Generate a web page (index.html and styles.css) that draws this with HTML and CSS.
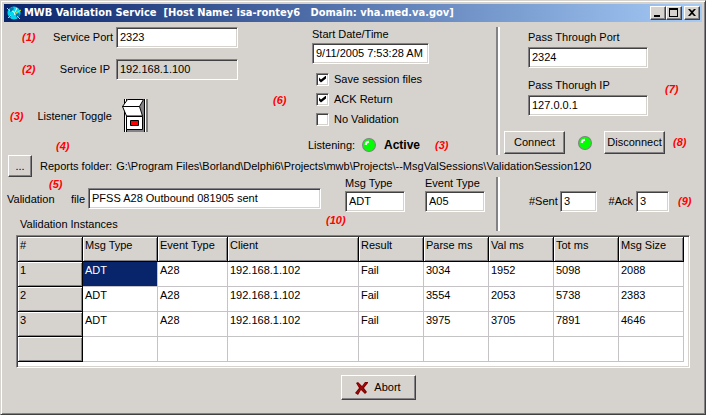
FILE: index.html
```html
<!DOCTYPE html>
<html lang="en">
<head>
<meta charset="utf-8">
<title>MWB Validation Service</title>
<link rel="stylesheet" href="styles.css">
</head>
<body>
<main class="window">
  <header class="titlebar">
    <svg class="app-icon" viewBox="0 0 16 16" aria-hidden="true">
      <circle cx="8" cy="8" r="6.5" fill="#00d8f0"/>
      <path d="M4 3l3-1 1 2-2 2-2 1zM10 9l3-1 1 2-2 3-2-1zM3 10l2 1v2z" fill="#0878a8"/>
      <path d="M6 6l2 1 1 3M11 3l-2 4" stroke="#fff" fill="none"/>
      <path d="M1 3l3 3M15 5l-5 3M2 13l3-3M11 11l3 3" stroke="#d8d820"/>
    </svg>
    <h1 class="title">MWB Validation Service  [Host Name: isa-rontey6   Domain: vha.med.va.gov]</h1>
    <div class="window-buttons">
      <button class="button caption-button" type="button" aria-label="Minimize"><svg viewBox="0 0 12 10"><path d="M2 7h6v2H2z"/></svg></button>
      <button class="button caption-button" type="button" aria-label="Maximize"><svg viewBox="0 0 12 10"><path d="M1 0h9v9H1zM2 2v6h7V2z" fill-rule="evenodd"/></svg></button>
      <button class="button caption-button close" type="button" aria-label="Close"><svg viewBox="0 0 12 10"><path d="M2 1h2l2 2 2-2h2L7 4.500l3 3.500H8L6 6 4 8H2l3-3.500z"/></svg></button>
    </div>
  </header>

  <form class="client">
    <section class="top">
      <div class="service">
        <div class="service-row">
          <span class="note">(1)</span>
          <label for="port">Service Port</label>
          <input class="field" id="port" type="text" value="2323">
        </div>
        <div class="service-row">
          <span class="note">(2)</span>
          <label class="ip-label" for="ip">Service IP</label>
          <input class="field locked" id="ip" type="text" value="192.168.1.100" readonly>
        </div>
        <div class="toggle-row">
          <span class="note">(3)</span>
          <label for="toggle">Listener Toggle</label>
          <button class="toggle" id="toggle" type="button">
            <svg viewBox="0 0 26 34" aria-hidden="true">
              <path d="M2 0h24v33H2z" fill="#fff"/>
              <path d="M17 7l5-7v33H5v-3h15V17z" fill="#848284"/>
              <path d="M2.500 0v33M4.500 0v33M22.500 0v33M25 0v33" stroke="#000"/>
              <path d="M5.500.5h16l-4 7H.5z" fill="#fff" stroke="#000"/>
              <path d="M.5 7.500h17l3 9.500h-16z" fill="#fff" stroke="#000"/>
              <path d="M4.500 17.500h16v13h-16z" fill="#fff" stroke="#000"/>
              <path d="M8.500 21.500h8v5h-8z" fill="#f00" stroke="#000"/>
            </svg>
          </button>
        </div>
        <span class="note note-folder">(4)</span>
      </div>

      <div class="session">
        <label for="start">Start Date/Time</label>
        <input class="field start" id="start" type="text" value="9/11/2005 7:53:28 AM">
        <span class="note note-options">(6)</span>
        <div class="checks">
          <label class="check"><input type="checkbox" checked>Save session files</label>
          <label class="check"><input type="checkbox" checked>ACK Return</label>
          <label class="check"><input type="checkbox">No Validation</label>
        </div>
        <div class="listening">
          <span class="caption">Listening:</span>
          <svg class="led" viewBox="0 0 13 13" aria-hidden="true"><circle cx="6.500" cy="6.500" r="6" fill="#0f0" stroke="#848284"/><path d="M3.500 6.500q0-3 3-3" stroke="#fff" stroke-width="2" fill="none"/></svg>
          <strong class="status">Active</strong>
          <span class="note">(3)</span>
        </div>
      </div>

      <div class="pass divided">
        <div class="pass-fields">
          <label for="pass-port">Pass Through Port</label>
          <input class="field" id="pass-port" type="text" value="2324">
          <label for="pass-ip">Pass Thorugh IP</label>
          <input class="field" id="pass-ip" type="text" value="127.0.0.1">
          <span class="note note-pass">(7)</span>
        </div>
        <div class="connection">
          <button class="button" type="button">Connect</button>
          <svg class="led" viewBox="0 0 13 13" aria-hidden="true"><circle cx="6.500" cy="6.500" r="6" fill="#0f0" stroke="#848284"/><path d="M3.500 6.500q0-3 3-3" stroke="#fff" stroke-width="2" fill="none"/></svg>
          <button class="button" type="button">Disconnect</button>
          <span class="note">(8)</span>
        </div>
      </div>
    </section>

    <section class="reports">
      <button class="button browse" type="button">...</button>
      <span>Reports folder:</span>
      <output class="path">G:\Program Files\Borland\Delphi6\Projects\mwb\Projects\--MsgValSessions\ValidationSession120</output>
    </section>

    <section class="details">
      <div class="message">
        <div class="message-row">
          <label class="file-label" for="file"><span>Validation</span> <span>file</span></label>
          <span class="note note-file">(5)</span>
          <input class="field file" id="file" type="text" value="PFSS A28 Outbound 081905 sent">
          <div class="type">
            <label for="msg">Msg Type</label>
            <input class="field" id="msg" type="text" value="ADT">
          </div>
          <div class="type">
            <label for="event">Event Type</label>
            <input class="field" id="event" type="text" value="A05">
          </div>
        </div>
        <span class="note note-message">(10)</span>
        <h2 class="heading" id="instances">Validation Instances</h2>
      </div>
      <div class="counts divided">
        <label for="sent">#Sent</label>
        <input class="field" id="sent" type="text" value="3">
        <label for="ack">#Ack</label>
        <input class="field" id="ack" type="text" value="3">
        <span class="note">(9)</span>
      </div>
    </section>

    <div class="grid">
      <table aria-labelledby="instances">
        <colgroup><col class="w-id"><col class="w-msg"><col class="w-event"><col class="w-client"><col class="w-num"><col class="w-num"><col class="w-num"><col class="w-num"><col class="w-num"></colgroup>
        <thead>
          <tr><th>#</th><th>Msg Type</th><th>Event Type</th><th>Client</th><th>Result</th><th>Parse ms</th><th>Val ms</th><th>Tot ms</th><th>Msg Size</th></tr>
        </thead>
        <tbody>
          <tr><th>1</th><td class="selected">ADT</td><td>A28</td><td>192.168.1.102</td><td>Fail</td><td>3034</td><td>1952</td><td>5098</td><td>2088</td></tr>
          <tr><th>2</th><td>ADT</td><td>A28</td><td>192.168.1.102</td><td>Fail</td><td>3554</td><td>2053</td><td>5738</td><td>2383</td></tr>
          <tr><th>3</th><td>ADT</td><td>A28</td><td>192.168.1.102</td><td>Fail</td><td>3975</td><td>3705</td><td>7891</td><td>4646</td></tr>
          <tr><th></th><td></td><td></td><td></td><td></td><td></td><td></td><td></td><td></td></tr>
        </tbody>
      </table>
    </div>

    <footer class="actions">
      <button class="button abort" type="button">
        <svg viewBox="0 0 13 14" aria-hidden="true"><path d="M1 2l2-1 4 4 3-4h3v1L9 7l3 4-2 2-4-4-3 5-3-2 4-5z" fill="#840000"/><path d="M3 3l7 8M11 2L2 12" stroke="#a81010" fill="none"/></svg>
        Abort
      </button>
    </footer>
  </form>
</main>
</body>
</html>
```

FILE: styles.css
```css
* { box-sizing: border-box; }

body {
  margin: 0;
  background: #d6d3ce;
  color: #000;
  font: 11px/13px "Liberation Sans", Arial, sans-serif;
}

.window {
  min-height: 100vh;
  padding: 3px;
  border: 1px solid;
  border-color: #d6d3ce #424142 #424142 #d6d3ce;
  box-shadow: inset 1px 1px #fff, inset -1px -1px #848284;
}

.titlebar {
  display: flex;
  align-items: center;
  height: 18px;
  padding: 0 2px;
  background: linear-gradient(to right, #0a246a, #a5cbf7);
}

.app-icon { width: 16px; height: 16px; }

.title {
  flex: 1;
  margin: 0 0 0 2px;
  color: #fff;
  font: bold 11px/16px "DejaVu Sans Condensed", Tahoma, sans-serif;
  white-space: pre;
}

.window-buttons { display: flex; }

.button {
  display: flex;
  align-items: center;
  justify-content: center;
  padding: 0;
  border: 1px solid;
  border-color: #fff #424142 #424142 #fff;
  background: #d6d3ce;
  box-shadow: inset -1px -1px #848284;
  color: inherit;
  font: inherit;
}

.caption-button { width: 16px; height: 14px; }
.caption-button svg { width: 12px; height: 10px; }
.close { margin-left: 2px; }

.field {
  display: block;
  width: 100%;
  min-width: 0;
  height: 21px;
  padding: 0 3px 2px;
  border: 1px solid;
  border-color: #848284 #fff #fff #848284;
  border-radius: 0;
  background: #fff;
  box-shadow: inset 1px 1px #424142, inset -1px -1px #d6d3ce;
  color: inherit;
  font: inherit;
}

.locked { background: #d6d3ce; }

.note {
  color: #f00;
  font: italic bold 11px/13px "Liberation Sans", Arial, sans-serif;
}

.led { width: 14px; height: 14px; }

.top {
  display: grid;
  grid-template-columns: 304fr 188fr 206fr;
  height: 133px;
  padding-top: 5px;
}

.divided {
  border-left: 2px solid #848284;
  box-shadow: inset 2px 0 #fff;
}

.service { position: relative; }

.service-row {
  display: grid;
  grid-template-columns: 30px 1fr 122px;
  align-items: center;
  width: 216px;
  margin: 0 0 11px 18px;
}

.service-row label { text-align: right; padding-right: 3px; }
.service-row .ip-label { padding-right: 6px; }

.toggle-row {
  display: flex;
  align-items: center;
  margin: 19px 0 0 6px;
}

.toggle-row label { width: 85px; margin-left: 14px; }

.toggle {
  width: 26px;
  height: 34px;
  padding: 0;
  border: 0;
  background: none;
}

.toggle svg { display: block; width: 26px; height: 34px; }

.note-folder { position: absolute; left: 52px; top: 113px; }

.session { position: relative; padding: 1px 0 0 4px; }
.session .start { width: 117px; margin-top: 2px; }
.note-options { position: absolute; left: -35px; top: 67px; }
.checks { margin: 5px 0 0 4px; }

.check {
  display: flex;
  align-items: center;
  gap: 5px;
  height: 20px;
}

.check input {
  appearance: none;
  width: 13px;
  height: 13px;
  margin: 0;
  border: 1px solid;
  border-color: #848284 #fff #fff #848284;
  background: #fff;
  box-shadow: inset 1px 1px #424142, inset -1px -1px #d6d3ce;
}

.check input:checked::before {
  content: "";
  display: block;
  width: 7px;
  height: 7px;
  margin: 2px;
  background: #000;
  clip-path: polygon(0 28%, 0 72%, 28% 100%, 100% 43%, 100% 0, 28% 57%);
}

.listening {
  display: flex;
  align-items: center;
  margin: 9px 0 0 -4px;
}

.caption { width: 54px; }
.status { width: 51px; padding-left: 8px; font-size: 12px; }
.listening .note { margin-left: 8px; }

.pass { padding-left: 6px; }

.pass-fields {
  position: relative;
  width: 120px;
  margin: 4px 0 0 24px;
}

.pass-fields .field { margin: 3px 0 11px; }
.note-pass { position: absolute; left: 137px; top: 52px; }

.connection {
  display: grid;
  grid-template-columns: 61px 39px 61px 1fr;
  align-items: center;
  justify-items: center;
  margin-top: 15px;
}

.connection .button { width: 61px; height: 23px; }
.connection .note { justify-self: start; margin-left: 8px; }

.reports {
  display: flex;
  align-items: center;
  height: 22px;
  padding-left: 4px;
}

.browse { width: 24px; height: 22px; margin-right: 8px; }
.path { margin-left: 4px; white-space: nowrap; }

.details {
  display: grid;
  grid-template-columns: 492fr 206fr;
  height: 54px;
}

.message { position: relative; }

.message-row {
  display: flex;
  align-items: flex-end;
  gap: 20px;
  height: 35px;
}

.file-label {
  display: flex;
  justify-content: space-between;
  width: 78px;
  margin: 0 -17px 6px 3px;
}

.note-file { position: absolute; left: 45px; top: 1px; }
.note-message { position: absolute; left: 322px; top: 37px; }
.message-row .file { width: 233px; margin: 0 4px 3px 0; }
.type { width: 60px; white-space: nowrap; }
.type .field { margin-top: 1px; }

.heading {
  margin: 6px 0 0 16px;
  font: inherit;
}

.counts {
  display: grid;
  grid-template-columns: 31px 37px 39px 33px 1fr;
  align-items: center;
  align-content: start;
  padding: 14px 0 0 31px;
}

.counts label { text-align: right; padding-right: 3px; }
.counts .note { margin-left: 9px; }

.grid {
  margin: 4px 12px 0;
  padding: 1px 5px 5px 1px;
  border: 1px solid;
  border-color: #848284 #fff #fff #848284;
  background: #fff;
  box-shadow: inset 1px 1px #424142, inset -1px -1px #d6d3ce;
}

table {
  width: 100%;
  border-collapse: separate;
  border-spacing: 0;
  table-layout: fixed;
}

.w-id { width: 65px; }
.w-msg { width: 75px; }
.w-event { width: 70px; }
.w-client { width: 131px; }
.w-num { width: 65px; }

th, td {
  height: 25px;
  padding: 2px 2px 0;
  border: solid #c6c3c6;
  border-width: 0 1px 1px 0;
  font-weight: normal;
  text-align: left;
  vertical-align: top;
}

th {
  border-color: #000;
  background: #d6d3ce;
  box-shadow: inset 1px 1px #fff, inset -1px -1px #848284;
}

.selected { background: #08246b; color: #fff; }

.actions {
  display: flex;
  justify-content: center;
  padding: 7px 0 10px;
}

.abort {
  width: 75px;
  height: 25px;
  margin-left: 50px;
  gap: 6px;
}

.abort svg { width: 13px; height: 14px; }
```
